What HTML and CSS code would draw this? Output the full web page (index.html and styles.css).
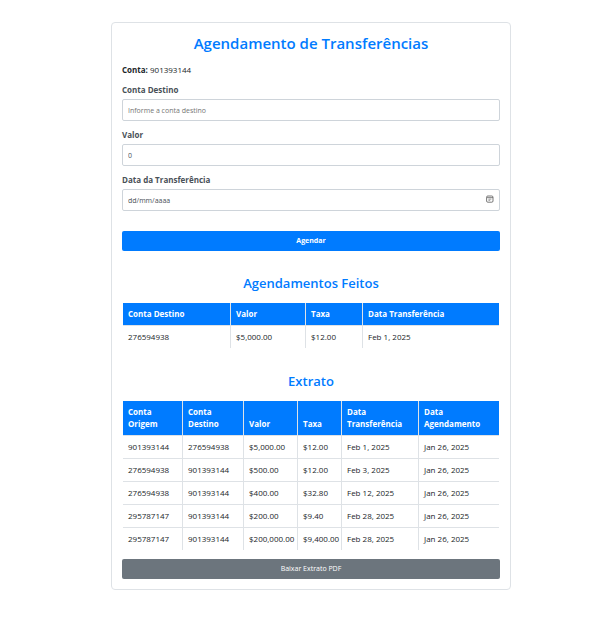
FILE: index.html
```html
<!DOCTYPE html>
<html lang="pt-BR">
<head>
<meta charset="utf-8">
<meta name="viewport" content="width=device-width, initial-scale=1">
<title>Agendamento de Transferências</title>
<link rel="stylesheet" href="styles.css">
</head>
<body>
<main class="card">
  <h1 class="title">Agendamento de Transferências</h1>
  <p class="account"><strong>Conta:</strong> 901393144</p>
  <form class="form">
    <div class="field">
      <label for="destino">Conta Destino</label>
      <input id="destino" class="control" type="text" placeholder="Informe a conta destino">
    </div>
    <div class="field">
      <label for="valor">Valor</label>
      <input id="valor" class="control" type="text" inputmode="decimal" value="0">
    </div>
    <div class="field">
      <label for="data">Data da Transferência</label>
      <div class="date">
        <input id="data" class="control control-date" type="text" placeholder="dd/mm/aaaa">
        <button class="picker" type="button" aria-label="Abrir calendário">
          <svg viewBox="0 0 8 8" width="8" height="8" fill="none" stroke="#555"><rect x=".6" y="1" width="6.4" height="6.2" rx="1.2" stroke-width=".8"/><path d="M1 2.6h6" stroke-width=".7"/><path d="M2.4 4.1h3M2.4 5.3h1.8" stroke-width=".6"/></svg>
        </button>
      </div>
    </div>
    <button class="btn btn-primary" type="submit">Agendar</button>
  </form>

  <h2 class="subtitle">Agendamentos Feitos</h2>
  <table class="table">
    <colgroup><col class="w-107"><col class="w-75"><col class="w-57"><col></colgroup>
    <thead><tr><th>Conta Destino</th><th>Valor</th><th>Taxa</th><th>Data Transferência</th></tr></thead>
    <tbody><tr><td>276594938</td><td>$5,000.00</td><td>$12.00</td><td>Feb 1, 2025</td></tr></tbody>
  </table>

  <h2 class="subtitle">Extrato</h2>
  <table class="table">
    <colgroup><col class="w-59"><col class="w-61"><col class="w-54"><col class="w-44"><col class="w-77"><col></colgroup>
    <thead><tr><th>Conta<br>Origem</th><th>Conta<br>Destino</th><th>Valor</th><th>Taxa</th><th>Data<br>Transferência</th><th>Data<br>Agendamento</th></tr></thead>
    <tbody>
      <tr><td>901393144</td><td>276594938</td><td>$5,000.00</td><td>$12.00</td><td>Feb 1, 2025</td><td>Jan 26, 2025</td></tr>
      <tr><td>276594938</td><td>901393144</td><td>$500.00</td><td>$12.00</td><td>Feb 3, 2025</td><td>Jan 26, 2025</td></tr>
      <tr><td>276594938</td><td>901393144</td><td>$400.00</td><td>$32.80</td><td>Feb 12, 2025</td><td>Jan 26, 2025</td></tr>
      <tr><td>295787147</td><td>901393144</td><td>$200.00</td><td>$9.40</td><td>Feb 28, 2025</td><td>Jan 26, 2025</td></tr>
      <tr><td>295787147</td><td>901393144</td><td>$200,000.00</td><td>$9,400.00</td><td>Feb 28, 2025</td><td>Jan 26, 2025</td></tr>
    </tbody>
  </table>
  <button class="btn btn-secondary" type="button">Baixar Extrato PDF</button>
</main>
</body>
</html>
```
FILE: styles.css
```css
* { box-sizing: border-box; }

body {
  margin: 0;
  padding: 22px 16px 22px 32px;
  background: #fff;
  color: #212529;
  font: 8px/12px "Segoe UI", "Open Sans", "Noto Sans", sans-serif;
}

.card {
  max-width: 400px;
  margin: 0 auto;
  padding: 10px;
  border: 1px solid #dee2e6;
  border-radius: 4px;
}

.title,
.subtitle {
  margin: 0;
  color: #007bff;
  font-weight: 600;
  text-align: center;
}

.title { font-size: 15px; line-height: 20px; }

.subtitle {
  margin: 24px 0 12px;
  font-size: 13px;
  line-height: 16px;
}

.account { margin: 11px 0 8px; }

.field { margin-bottom: 8px; }

.field label {
  display: block;
  margin-bottom: 3px;
  color: #495057;
  font-weight: 700;
}

.control {
  display: block;
  width: 100%;
  height: 22px;
  padding: 0 5px;
  border: 1px solid #ced4da;
  border-radius: 2px;
  background: #fff;
  color: #495057;
  font: inherit;
  font-size: 7px;
}

.control::placeholder { color: #757575; opacity: 1; }
.control-date::placeholder { color: #495057; }

.date { position: relative; }

.picker {
  position: absolute;
  top: 6px;
  right: 6px;
  display: flex;
  padding: 0;
  border: 0;
  background: none;
}

.btn {
  display: block;
  width: 100%;
  height: 20px;
  padding: 0;
  border: 0;
  border-radius: 2px;
  color: #fff;
  font: inherit;
  font-size: 7px;
}

.btn-primary { margin-top: 20px; background: #007bff; font-weight: 700; }
.btn-secondary { margin-top: 9px; background: #6c757d; }

.table {
  width: calc(100% - 2px);
  margin: 0 1px;
  border-spacing: 0;
  table-layout: fixed;
}

.table + .subtitle { margin-top: 25px; }

.table th,
.table td {
  padding: 5px;
  text-align: left;
  white-space: nowrap;
}

.table th {
  background: #007bff;
  color: #fff;
  font-weight: 700;
  vertical-align: bottom;
}

.table td { border-top: 1px solid #dee2e6; }

.table th + th,
.table td + td { border-left: 1px solid #dee2e6; }

.w-107 { width: 107px; }
.w-75 { width: 75px; }
.w-57 { width: 57px; }
.w-59 { width: 59px; }
.w-61 { width: 61px; }
.w-54 { width: 54px; }
.w-44 { width: 44px; }
.w-77 { width: 77px; }
```
